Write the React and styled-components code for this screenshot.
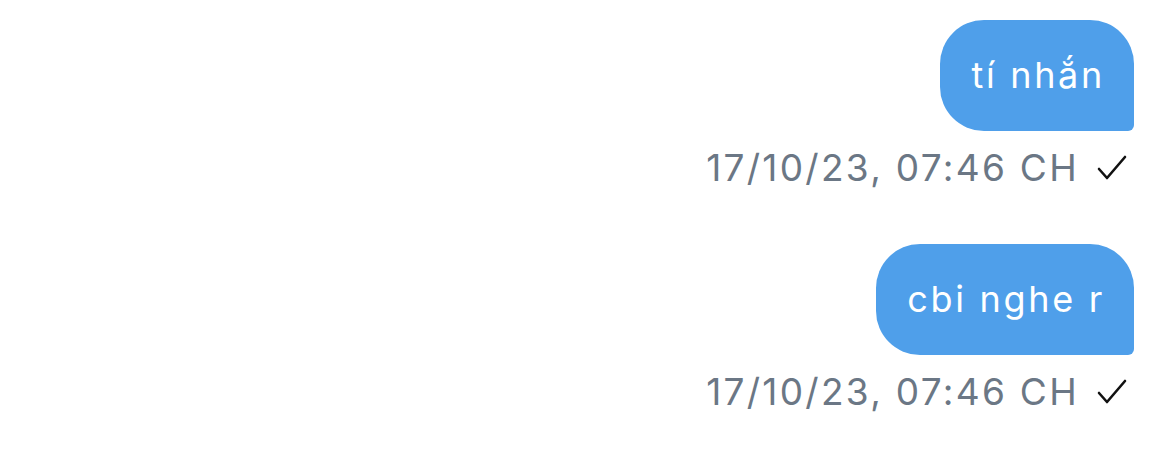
import React from "react";
import styled, { createGlobalStyle } from "styled-components";

const GlobalStyle = createGlobalStyle`
  body {
    margin: 0;
    background: #ffffff;
    font-family: Inter, "Noto Sans", sans-serif;
  }
`;

const Thread = styled.div`
  display: flex;
  flex-direction: column;
  align-items: flex-end;
  padding: 20px 36px 0 0;
  gap: 53px;
`;

const Message = styled.div`
  display: flex;
  flex-direction: column;
  align-items: flex-end;
  gap: 14px;
`;

const Bubble = styled.div`
  background: #4f9fea;
  color: #ffffff;
  font-size: 36px;
  line-height: 50px;
  letter-spacing: 2.7px;
  padding: 30px 29px 31px 31px;
  border-radius: 44px 44px 6px 44px;
`;

const Meta = styled.div`
  display: flex;
  align-items: center;
  gap: 18px;
  padding-right: 7px;
  color: #6b7785;
  font-size: 37px;
  line-height: 46px;
  letter-spacing: 2.3px;
`;

const Check = () => (
  <svg width="30" height="26" viewBox="0 0 30 26" fill="none">
    <path d="M2 14 L10 23 L28 2" stroke="#111" strokeWidth="2.6" strokeLinecap="round" strokeLinejoin="round" />
  </svg>
);

const messages = [
  { text: "tí nhắn", time: "17/10/23, 07:46 CH" },
  { text: "cbi nghe r", time: "17/10/23, 07:46 CH" },
];

export default function App() {
  return (
    <>
      <GlobalStyle />
      <Thread>
        {messages.map((m, i) => (
          <Message key={i}>
            <Bubble>{m.text}</Bubble>
            <Meta>
              <span>{m.time}</span>
              <Check />
            </Meta>
          </Message>
        ))}
      </Thread>
    </>
  );
}
